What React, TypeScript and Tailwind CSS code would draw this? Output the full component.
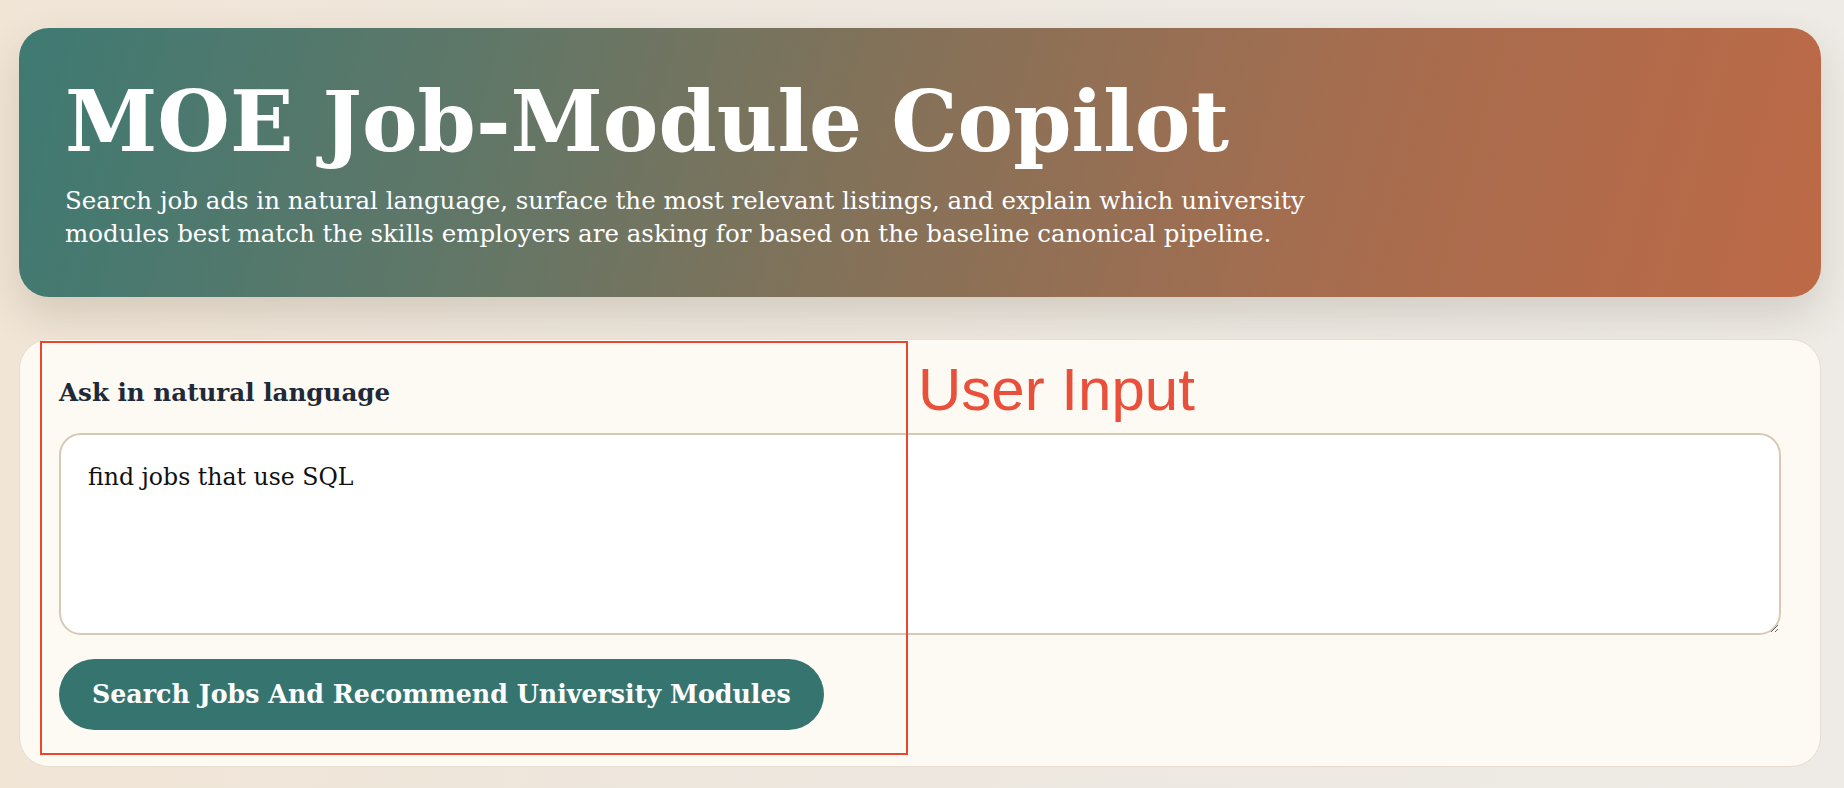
import React from "react"

const serif = { fontFamily: '"DejaVu Serif", Georgia, serif' }

export default function App() {
  return (
    <div className="min-h-[788px] w-full bg-[linear-gradient(90deg,#f1e5d6_0%,#ede7df_45%,#eeebe6_100%)] pt-[28px] pb-[22px]">
      <div className="ml-[19px] w-[1802px]" style={serif}>
        <header className="rounded-[30px] bg-[linear-gradient(105deg,#3e7a73_0%,#5f7768_25%,#80725a_45%,#a56d4f_72%,#bd6946_100%)] pl-[46px] pr-10 pt-[53px] pb-[47px] text-white shadow-[0_18px_40px_rgba(70,60,40,0.16)]">
          <h1 className="text-[83.4px] leading-none font-bold">MOE Job-Module Copilot</h1>
          <p className="mt-[20px] max-w-[1300px] text-[24.5px] leading-[33px]">
            Search job ads in natural language, surface the most relevant listings, and explain which university
            modules best match the skills employers are asking for based on the baseline canonical pipeline.
          </p>
        </header>

        <section className="relative mt-[42px] rounded-[30px] border border-[#e6ded0] bg-[#fdfaf3] px-[39px] pt-[37px] pb-[36px]">
          <label className="mb-6 block text-[24.6px] leading-[1.3] font-bold text-[#1f2937]">
            Ask in natural language
          </label>
          <textarea
            defaultValue="find jobs that use SQL"
            className="block h-[202px] w-full resize-y rounded-[22px] border-2 border-[#d6cab6] bg-white px-[27px] pt-[25px] text-[23.6px] leading-[1.5] text-[#111] outline-none"
            style={serif}
          />
          <button
            className="mt-6 flex h-[71px] items-center rounded-full bg-[#36756f] px-[33px] text-[25.3px] font-bold text-white"
            style={serif}
          >
            Search Jobs And Recommend University Modules
          </button>

          {/* annotation overlay */}
          <div className="pointer-events-none absolute top-[1px] left-[20px] h-[414px] w-[868px] border-2 border-[#e8462f]" />
          <div
            className="pointer-events-none absolute top-[20px] left-[898px] text-[60px] leading-none text-[#e8503c]"
            style={{ fontFamily: '"Liberation Sans", Arial, sans-serif' }}
          >
            User Input
          </div>
        </section>
      </div>
    </div>
  )
}
